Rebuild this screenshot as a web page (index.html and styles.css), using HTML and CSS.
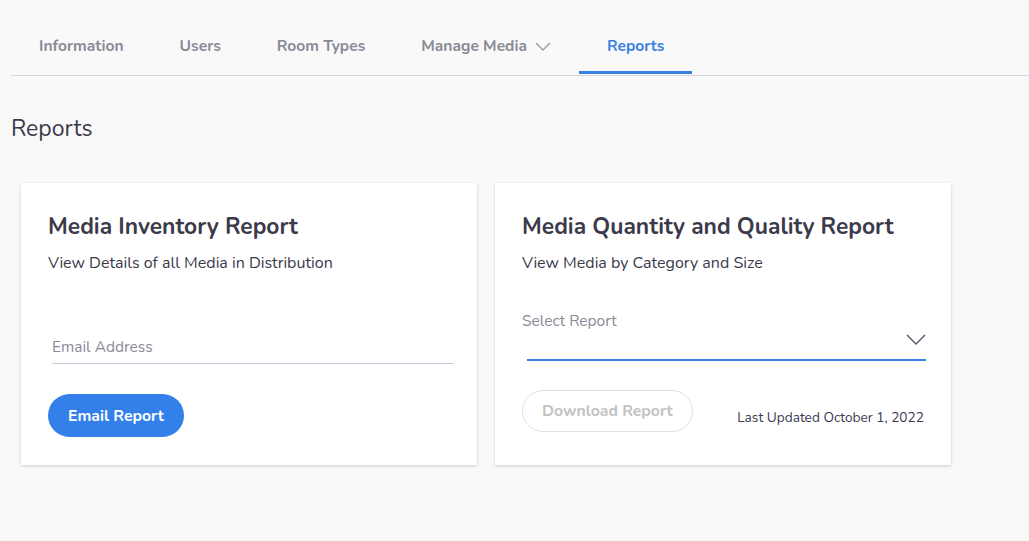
FILE: index.html
```html
<!DOCTYPE html>
<html>
<head>
<meta charset="utf-8">
<link rel="stylesheet" href="styles.css">
</head>
<body>
<nav class="tabs">
  <a class="tab">Information</a>
  <a class="tab">Users</a>
  <a class="tab">Room Types</a>
  <a class="tab">Manage Media
    <svg class="tab-chev" width="16" height="9" viewBox="0 0 16 9"><path d="M1 1 L8 8 L15 1" fill="none" stroke="#9a9aa6" stroke-width="1.3"/></svg>
  </a>
  <a class="tab active">Reports</a>
</nav>
<main class="page">
  <h1 class="page-title">Reports</h1>
  <div class="cards">
    <section class="card">
      <h2 class="card-title">Media Inventory Report</h2>
      <p class="card-sub">View Details of all Media in Distribution</p>
      <div class="field">
        <span class="field-label">Email Address</span>
      </div>
      <div class="actions">
        <button class="btn btn-primary">Email Report</button>
      </div>
    </section>
    <section class="card">
      <h2 class="card-title">Media Quantity and Quality Report</h2>
      <p class="card-sub">View Media by Category and Size</p>
      <div class="select">
        <span class="select-label">Select Report</span>
        <svg class="select-chev" width="20" height="11" viewBox="0 0 20 11"><path d="M1 1 L10 10 L19 1" fill="none" stroke="#55556a" stroke-width="1.4"/></svg>
      </div>
      <div class="actions actions-split">
        <button class="btn btn-disabled">Download Report</button>
        <span class="updated">Last Updated October 1, 2022</span>
      </div>
    </section>
  </div>
</main>
</body>
</html>
```
FILE: styles.css
```css
* { box-sizing: border-box; }
html, body { margin: 0; padding: 0; }
body {
  background: #f9f9f9;
  font-family: "Nunito", "Lato", "Open Sans", sans-serif;
  color: #3b3a4a;
  width: 1029px;
  height: 541px;
  overflow: hidden;
}
.tabs {
  display: flex;
  margin: 20px 0 0 11px;
  border-bottom: 1px solid #d6d6de;
  height: 56px;
}
.tab {
  display: flex;
  align-items: center;
  gap: 8px;
  height: 54px;
  padding: 0 28px 0 28px;
  font-size: 15.6px;
  font-weight: 700;
  color: #8a8a96;
  border-bottom: 3px solid transparent;
}
.tab.active {
  color: #3a7fe3;
  border-bottom-color: #3a7fe3;
}
.tab-chev { margin-top: 2px; }
.page { padding: 0 0 0 11px; }
.page-title {
  margin: 38px 0 0 0;
  font-size: 23px;
  font-weight: 400;
  line-height: 30px;
  color: #3b3a4a;
}
.cards {
  display: flex;
  gap: 18px;
  margin: 39px 0 0 10px;
}
.card {
  width: 456px;
  height: 282px;
  background: #fff;
  box-shadow: 0 1px 3px rgba(0,0,0,0.18);
  padding: 29px 27px 0 27px;
  display: flex;
  flex-direction: column;
}
.card-title {
  margin: 0;
  font-size: 22.8px;
  font-weight: 700;
  line-height: 30px;
  color: #3b3a4a;
}
.card-sub {
  margin: 11px 0 0 0;
  font-size: 16px;
  line-height: 20px;
  color: #3b3a4a;
}
.field {
  margin: 71px -4px 0 4px;
  border-bottom: 1px solid #c8cadb;
  height: 20px;
  display: flex;
  align-items: flex-start;
}
.field-label {
  font-size: 15.5px;
  line-height: 16px;
  color: #8b8a96;
  margin-top: -5px;
}
.actions {
  margin-top: 30px;
  display: flex;
  align-items: center;
}
.btn {
  font-family: inherit;
  font-size: 15.8px;
  font-weight: 700;
  height: 43px;
  border-radius: 22px;
  padding: 0 19px;
  border: 1px solid transparent;
}
.btn-primary {
  background: #3480ea;
  color: #fff;
}
.select {
  margin: 43px -2px 0 5px;
  height: 45px;
  border-bottom: 2px solid #3a7fe3;
  position: relative;
}
.select-label {
  position: absolute;
  left: -5px;
  top: -6px;
  font-size: 15.5px;
  color: #8b8a96;
}
.select-chev {
  position: absolute;
  right: 0;
  top: 18px;
}
.actions-split {
  margin-top: 29px;
  justify-content: space-between;
  padding-right: 0;
}
.btn-disabled {
  background: #fff;
  color: #c2c2c2;
  border-color: #e2e2e2;
  height: 42px;
}
.updated {
  font-size: 13.7px;
  color: #3a3a52;
  margin-top: 12px;
}
```
